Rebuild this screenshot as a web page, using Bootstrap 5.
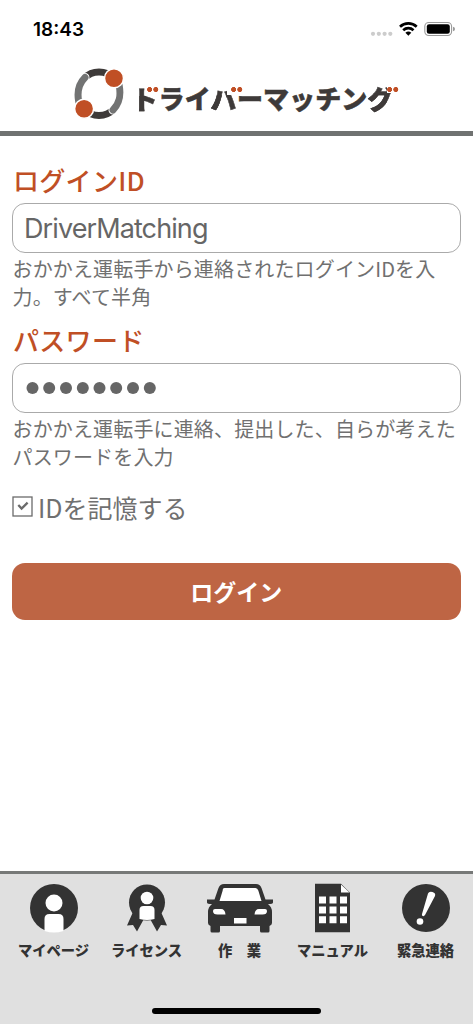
<!DOCTYPE html>
<html lang="ja">
<head>
<meta charset="utf-8">
<meta name="viewport" content="width=device-width, initial-scale=1">
<title>ドライバーマッチング</title>
<link href="https://cdn.jsdelivr.net/npm/bootstrap@5.3.0/dist/css/bootstrap.min.css" rel="stylesheet">
<style>
  body { font-family: "Noto Sans CJK JP", sans-serif; color: #707070; height: 100vh; overflow: hidden; }
  svg { display: block; flex: none; }
  .status-bar { height: 60px; padding: 0 18px 0 33px; color: #000; }
  .clock { font: 600 19px/60px Inter, sans-serif; letter-spacing: 0; }
  .brand-bar { height: 76px; padding: 7px 0 0 73px; border-bottom: 5px solid #707271; }
  .wordmark { font-size: 26px; font-weight: 900; line-height: 36px; white-space: nowrap; margin: 13px 0 0 5.500px; letter-spacing: .1px; color: #3e3a39; -webkit-text-stroke: .5px; }
  /* voiced kana: the dakuten is masked out and drawn as two orange dots */
  .voiced { position: relative; display: inline-block; color: transparent; -webkit-background-clip: text; background-clip: text; background-image: linear-gradient(#3e3a39, #3e3a39), linear-gradient(#3e3a39, #3e3a39); background-repeat: no-repeat; background-size: var(--stem) 100%, 100% calc(100% - var(--drop)); background-position: 0 0, 0 100%; }
  .voiced::after { content: ""; position: absolute; left: var(--dots); top: 7px; width: 12px; height: 5px; background: radial-gradient(circle at 2.600px 2.500px, #c04f25 2.200px, transparent 2.800px), radial-gradient(circle at 8.800px 2.500px, #c04f25 2.200px, transparent 2.800px); }
  .v-do { --stem: 13px; --drop: 15.500px; --dots: 14px; }
  .v-ba { --stem: 16px; --drop: 15px; --dots: 20px; }
  .v-gu { --stem: 20px; --drop: 13px; --dots: 20px; }
  .login-form { padding: 27px 12.500px 0 12px; }
  .field-label { display: block; font-size: 26px; font-weight: 500; line-height: 34px; color: #c04f25; margin: 0 0 6px 1px; letter-spacing: .3px; }
  .login-form .form-control { height: 50px; border: 1px solid #aaa; border-radius: 13px; padding: 0 11px; color: #666; font: 400 27px/48px Inter, sans-serif; letter-spacing: -.9px; }
  .hint { font-size: 20px; line-height: 28px; margin: 2px 0 0 .5px; letter-spacing: .15px; }
  .second-field { margin-top: 12px; }
  .remember { font-size: 25px; line-height: 36px; margin-top: 18px; }
  .btn-login { height: 57px; margin-top: 38px; border: 0; border-radius: 13px; background: #be6544; color: #fff; font-size: 23px; font-weight: 700; }
  .tab-bar { height: 153px; background: #e0e0e0; border-top: 3px solid #777978; padding-top: 9px; }
  .tab-link { width: 93px; color: #333; font-size: 14.300px; font-weight: 900; line-height: 20px; text-decoration: none; white-space: nowrap; }
  .tab-link svg { margin-bottom: 7px; }
  .tab-row { padding-left: 6px; }
  .home-bar { width: 169px; height: 6px; border-radius: 3px; background: #000; margin-bottom: 10px; }
</style>
</head>
<body class="bg-white d-flex flex-column">
<div class="status-bar d-flex justify-content-between">
  <span class="clock">18:43</span>
  <svg width="86" height="60" viewBox="369 0 86 60">
    <g fill="#ccc"><circle cx="373" cy="33.8" r="2.1"/><circle cx="378.8" cy="33.8" r="2.1"/><circle cx="384.6" cy="33.8" r="2.1"/><circle cx="390.3" cy="33.8" r="2.1"/></g>
    <g fill="none" stroke="#000" stroke-width="2.7"><path d="M400 26.7a12.2 12.2 0 0 1 16.7 0"/><path d="M403.2 30.2a7.500 7.500 0 0 1 10.3 0"/></g>
    <path d="M405.4 32.7a4.6 4.6 0 0 1 5.9 0l-2.95 3z"/>
    <rect x="424.8" y="22.500" width="26.8" height="13" rx="4" fill="none" stroke="#999" stroke-width="1.1"/>
    <rect x="426.8" y="24.3" width="23" height="9.4" rx="2.3"/>
    <path d="M453 26.7q2 .6 2 2.3t-2 2.3z" fill="#999"/>
  </svg>
</div>
<header class="brand-bar d-flex">
  <svg width="54" height="54" viewBox="73 66.5 54 54">
    <g fill="none" stroke-width="7">
      <ellipse cx="99" cy="93.2" rx="21" ry="21.8" stroke="#3e3a39"/>
      <path d="M85 77C78 84 77 92 78.7 101M113 109.500C120 102.500 121 95 119.200 85" stroke="#fff" stroke-width="9" stroke-linecap="round"/>
      <path d="M85 77C78 84 77 92 78.7 101M113 109.500C120 102.500 121 95 119.200 85" stroke="#727373" stroke-linecap="round"/>
    </g>
    <g fill="#c04f25" stroke="#fff" stroke-width="1.500"><circle cx="114" cy="77.700" r="9.500"/><circle cx="84.100" cy="108.300" r="9.500"/></g>
  </svg>
  <h1 class="wordmark"><span class="voiced v-do">ド</span>ライ<span class="voiced v-ba">バ</span>ーマッチン<span class="voiced v-gu">グ</span></h1>
</header>
<main class="flex-grow-1">
  <form class="login-form">
    <label class="field-label" for="loginId">ログインID</label>
    <input class="form-control" id="loginId" type="text" value="DriverMatching">
    <p class="hint">おかかえ運転手から連絡されたログインIDを入力。すべて半角</p>
    <label class="field-label second-field" for="password">パスワード</label>
    <div class="form-control d-flex align-items-center" id="password" role="textbox">
      <svg width="134" height="14" viewBox="0 0 134 14" fill="#666"><circle cx="8.500" cy="7" r="6"/><circle cx="25.200" cy="7" r="6"/><circle cx="42" cy="7" r="6"/><circle cx="58.800" cy="7" r="6"/><circle cx="75.500" cy="7" r="6"/><circle cx="92.200" cy="7" r="6"/><circle cx="109" cy="7" r="6"/><circle cx="125.800" cy="7" r="6"/></svg>
    </div>
    <p class="hint">おかかえ運転手に連絡、提出した、自らが考えたパスワードを入力</p>
    <div class="remember d-flex align-items-center">
      <svg class="me-1" width="22" height="22" viewBox="0 0 22 22" fill="none" stroke="#6b6b6b"><rect x="1" y="1" width="19" height="19" stroke-width="1.300"/><path d="m6.300 9 3.300 3.600 6-6" stroke-width="2.300"/></svg>
      <span>IDを記憶する</span>
    </div>
    <button class="btn btn-login w-100" type="button">ログイン</button>
  </form>
</main>
<nav class="tab-bar d-flex flex-column justify-content-between align-items-center">
  <div class="tab-row d-flex w-100 justify-content-center">
    <a class="tab-link d-flex flex-column align-items-center" href="#">
      <svg width="50" height="50" viewBox="0 0 50 50"><circle cx="25" cy="25" r="24" fill="#333"/><circle cx="25" cy="20" r="8.500" fill="#fff"/><path d="M15.500 48V36q0-5 5-5h9q5 0 5 5v12q-9.500 3-19 0" fill="#fff"/></svg>
      <span>マイページ</span>
    </a>
    <a class="tab-link d-flex flex-column align-items-center" href="#">
      <svg width="50" height="50" viewBox="0 0 50 50"><path d="M11 29 5 42.500l6-.5 4 6.500L23 34zM39 29l6 13.500-6-.5-4 6.500L27 34z" fill="#333"/><circle cx="25" cy="19.500" r="18" fill="#333"/><circle cx="25" cy="15" r="6.300" fill="#fff"/><path d="M17.500 36V27q0-4 4-4h7q4 0 4 4v9q-7.500 2-15 0" fill="#fff"/></svg>
      <span>ライセンス</span>
    </a>
    <a class="tab-link d-flex flex-column align-items-center" href="#">
      <svg width="68" height="50" viewBox="0 0 68 50"><path d="M18 1h32q4 0 5.500 4l4 11.500H67v3q0 1.500-5 1.500 4 3 4 8v11q0 2-2.500 3v5q0 1.500-1.500 1.500h-6.500q-1.500 0-1.500-1.500v-5H14v5q0 1.500-1.500 1.500H6q-1.500 0-1.500-1.500v-5Q2 42 2 40V29q0-5 4-8-5 0-5-1.500v-3h7.500L12.500 5Q14 1 18 1" fill="#333"/><path d="M18.500 5h31q2 0 2.800 2.500L55.500 18h-42l3.200-10.500Q16.500 5 18.500 5M9 26h6q4 0 4.500 5.500h-8Q7 31.500 7 28q0-2 2-2M59 26h-6q-4 0-4.500 5.500h8q4.500 0 4.500-3.500 0-2-2-2M28 35h12.500v5.500H28z" fill="#fff"/></svg>
      <span>作　業</span>
    </a>
    <a class="tab-link d-flex flex-column align-items-center" href="#">
      <svg width="50" height="50" viewBox="0 0 50 50"><path d="M7 .8h26l9 9v39.500H7z" fill="#333"/><path d="M33 1.500v8h8.500zM11 13.500h7v7h-7zm10.500 0h7v7h-7zm10.500 0h7v7h-7zM11 23.500h7v7h-7zm10.500 0h7v7h-7zm10.500 0h7v7h-7zM11 33.300h7v7h-7zm10.500 0h7v7h-7zm10.500 0h7v7h-7z" fill="#fff"/></svg>
      <span>マニュアル</span>
    </a>
    <a class="tab-link d-flex flex-column align-items-center" href="#">
      <svg width="50" height="50" viewBox="0 0 50 50"><circle cx="25" cy="25" r="24" fill="#333"/><path d="M27 10.500q1-2.500 4.500-1.500t2.500 4L24 32q-1 1.500-2.300 1-1.200-.5-.7-2z" fill="#fff"/><circle cx="19" cy="38.500" r="3.300" fill="#fff"/></svg>
      <span>緊急連絡</span>
    </a>
  </div>
  <div class="home-bar"></div>
</nav>
<script src="https://cdn.jsdelivr.net/npm/bootstrap@5.3.0/dist/js/bootstrap.bundle.min.js"></script>
</body>
</html>
